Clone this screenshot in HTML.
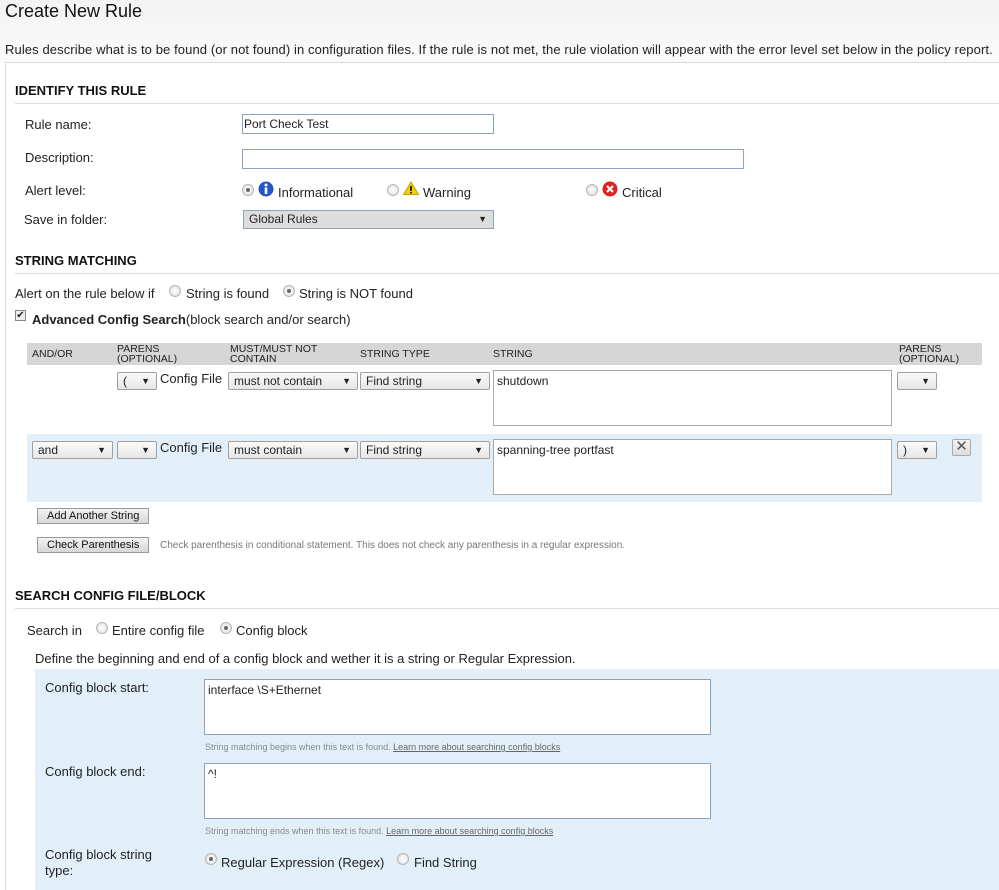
<!DOCTYPE html>
<html><head><meta charset="utf-8"><style>
*{box-sizing:border-box;margin:0;padding:0}
body{width:999px;height:890px;overflow:hidden;font-family:"Liberation Sans",sans-serif;font-size:13px;color:#222;background:#fff;position:relative}
.a{position:absolute;white-space:nowrap}
.hdr{position:absolute;left:0;top:0;width:999px;height:62px;background:linear-gradient(#f3f3f3,#fafafa)}
.h{font-weight:bold;font-size:13px;color:#111}
.ln{position:absolute;height:1px;background:#dcdcdc}
.inp{position:absolute;border:1px solid #8aa4bf;background:#fff;height:20px;padding:2px 1px;font-size:12px}
.sel{position:absolute;border:1px solid #a0a0a0;background:linear-gradient(#fafafa,#e6e6e6);height:18px;font-size:12px;padding:1px 5px;border-radius:2px}
.sel:after{content:"▼";position:absolute;right:6px;top:3px;font-size:9px}
.ta{position:absolute;border:1px solid #aaa;background:#fff;padding:3px;font-size:12px}
.rd{position:absolute;width:12px;height:12px;border-radius:50%;border:1px solid #b5b5b5;background:radial-gradient(#fff,#ddd)}
.rd.on:after{content:"";position:absolute;left:3px;top:3px;width:4px;height:4px;border-radius:50%;background:#666}
.btn{position:absolute;border:1px solid #999;background:linear-gradient(#f2f2f2,#d8d8d8);font-size:11px;height:16px;padding:1px 9px;color:#111}
.th{font-size:10.5px;line-height:10px;color:#222}
.small{font-size:9px;color:#888}
.small u{color:#666}
</style></head><body>
<div class="hdr"></div>
<div class="a" style="left:5px;top:1px;font-size:18px;color:#111">Create New Rule</div>
<div class="a" style="left:5px;top:42px;font-size:13px;letter-spacing:0.1px">Rules describe what is to be found (or not found) in configuration files. If the rule is not met, the rule violation will appear with the error level set below in the policy report.</div>
<div class="ln" style="left:5px;top:62px;width:994px"></div>
<div style="position:absolute;left:5px;top:62px;width:1px;height:828px;background:#dcdcdc"></div>

<div class="a h" style="left:15px;top:83px">IDENTIFY THIS RULE</div>
<div class="ln" style="left:15px;top:103px;width:984px"></div>
<div class="a" style="left:25px;top:117px">Rule name:</div>
<div class="inp" style="left:242px;top:114px;width:252px">Port Check Test</div>
<div class="a" style="left:25px;top:150px">Description:</div>
<div class="inp" style="left:242px;top:149px;width:502px"></div>
<div class="a" style="left:25px;top:183px">Alert level:</div>
<div class="rd on" style="left:242px;top:184px"></div>
<svg class="a" style="left:258px;top:181px" width="16" height="16"><circle cx="8" cy="8" r="7.5" fill="#2456c8"/><circle cx="8" cy="4" r="1.5" fill="#fff"/><rect x="6.7" y="6.5" width="2.6" height="6.5" fill="#fff"/></svg>
<div class="a" style="left:278px;top:185px">Informational</div>
<div class="rd" style="left:387px;top:184px"></div>
<svg class="a" style="left:403px;top:181px" width="16" height="14"><path d="M8 1L15.5 13.5H.5Z" fill="#f5d000" stroke="#c9a000"/><rect x="7.2" y="5" width="1.6" height="5" fill="#000"/><rect x="7.2" y="11" width="1.6" height="1.5" fill="#000"/></svg>
<div class="a" style="left:423px;top:185px">Warning</div>
<div class="rd" style="left:586px;top:184px"></div>
<svg class="a" style="left:602px;top:181px" width="16" height="16"><circle cx="8" cy="8" r="7.5" fill="#d22"/><path d="M5 5L11 11M11 5L5 11" stroke="#fff" stroke-width="2.2"/></svg>
<div class="a" style="left:622px;top:185px">Critical</div>
<div class="a" style="left:24px;top:212px">Save in folder:</div>
<div class="sel" style="left:243px;top:210px;width:251px;height:19px;background:#ddd;border-color:#8aa4bf;border-radius:0">Global Rules</div>

<div class="a h" style="left:15px;top:253px">STRING MATCHING</div>
<div class="ln" style="left:15px;top:273px;width:984px"></div>
<div class="a" style="left:15px;top:286px">Alert on the rule below if</div>
<div class="rd" style="left:169px;top:285px"></div>
<div class="a" style="left:186px;top:286px">String is found</div>
<div class="rd on" style="left:283px;top:285px"></div>
<div class="a" style="left:299px;top:286px">String is NOT found</div>
<div class="a" style="left:15px;top:310px;width:11px;height:11px;border:1px solid #888;background:#eee;font-size:10px;line-height:9px;text-align:center">✔</div>
<div class="a" style="left:32px;top:312px"><b>Advanced Config Search</b>(block search and/or search)</div>

<div style="position:absolute;left:27px;top:343px;width:955px;height:22px;background:#d6d6d6"></div>
<div class="a th" style="left:32px;top:349px">AND/OR</div>
<div class="a th" style="left:117px;top:344px">PARENS<br>(OPTIONAL)</div>
<div class="a th" style="left:230px;top:344px">MUST/MUST NOT<br>CONTAIN</div>
<div class="a th" style="left:360px;top:349px">STRING TYPE</div>
<div class="a th" style="left:493px;top:349px">STRING</div>
<div class="a th" style="left:899px;top:344px">PARENS<br>(OPTIONAL)</div>

<div class="sel" style="left:117px;top:372px;width:40px">(</div>
<div class="a" style="left:160px;top:371px">Config File</div>
<div class="sel" style="left:228px;top:372px;width:130px">must not contain</div>
<div class="sel" style="left:360px;top:372px;width:130px">Find string</div>
<div class="ta" style="left:493px;top:370px;width:399px;height:56px">shutdown</div>
<div class="sel" style="left:897px;top:372px;width:40px"></div>

<div style="position:absolute;left:27px;top:434px;width:955px;height:68px;background:#e3eff8"></div>
<div class="sel" style="left:32px;top:441px;width:81px">and</div>
<div class="sel" style="left:117px;top:441px;width:40px"></div>
<div class="a" style="left:160px;top:440px">Config File</div>
<div class="sel" style="left:228px;top:441px;width:130px">must contain</div>
<div class="sel" style="left:360px;top:441px;width:130px">Find string</div>
<div class="ta" style="left:493px;top:439px;width:399px;height:56px">spanning-tree portfast</div>
<div class="sel" style="left:897px;top:441px;width:40px">)</div>
<div class="a" style="left:952px;top:439px;width:19px;height:17px;border:1px solid #aaa;background:linear-gradient(#f4f4f4,#ddd);border-radius:2px;text-align:center;font-size:15px;line-height:14px;color:#555">✕</div>

<div class="btn" style="left:37px;top:508px">Add Another String</div>
<div class="btn" style="left:37px;top:537px">Check Parenthesis</div>
<div class="a" style="left:160px;top:540px;font-size:10px;color:#777">Check parenthesis in conditional statement. This does not check any parenthesis in a regular expression.</div>

<div class="a h" style="left:15px;top:588px">SEARCH CONFIG FILE/BLOCK</div>
<div class="ln" style="left:15px;top:608px;width:984px"></div>
<div class="a" style="left:27px;top:623px">Search in</div>
<div class="rd" style="left:96px;top:622px"></div>
<div class="a" style="left:112px;top:623px">Entire config file</div>
<div class="rd on" style="left:220px;top:622px"></div>
<div class="a" style="left:236px;top:623px">Config block</div>
<div class="a" style="left:35px;top:651px">Define the beginning and end of a config block and wether it is a string or Regular Expression.</div>

<div style="position:absolute;left:35px;top:669px;width:964px;height:221px;background:#e3eff8"></div>
<div class="a" style="left:45px;top:680px">Config block start:</div>
<div class="ta" style="left:204px;top:679px;width:507px;height:56px;border-color:#8aa4bf;font-size:12px">interface \S+Ethernet</div>
<div class="a small" style="left:205px;top:742px">String matching begins when this text is found. <u>Learn more about searching config blocks</u></div>
<div class="a" style="left:45px;top:764px">Config block end:</div>
<div class="ta" style="left:204px;top:763px;width:507px;height:56px;border-color:#8aa4bf;font-size:12px">^!</div>
<div class="a small" style="left:205px;top:826px">String matching ends when this text is found. <u>Learn more about searching config blocks</u></div>
<div class="a" style="left:45px;top:847px;line-height:16px">Config block string<br>type:</div>
<div class="rd on" style="left:205px;top:853px"></div>
<div class="a" style="left:221px;top:855px">Regular Expression (Regex)</div>
<div class="rd" style="left:397px;top:853px"></div>
<div class="a" style="left:414px;top:855px">Find String</div>
</body></html>
